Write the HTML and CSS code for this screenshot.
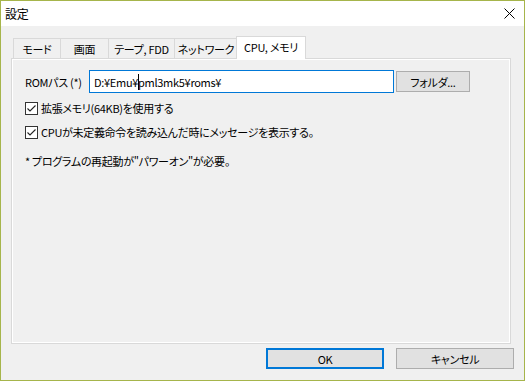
FILE: index.html
```html
<!DOCTYPE html>
<html lang="ja">
<head>
<meta charset="utf-8">
<title>設定</title>
<link rel="stylesheet" href="styles.css">
</head>
<body>
<div class="window">
  <div class="titlebar">
    <span class="title">設定</span>
    <span class="close">
      <svg width="11" height="11" viewBox="0 0 11 11"><path d="M0.5 0.5 L10.5 10.5 M10.5 0.5 L0.5 10.5" stroke="#000" stroke-width="1" fill="none"/></svg>
    </span>
  </div>
  <div class="content">
    <div class="tabs">
      <div class="tab t1">モード</div>
      <div class="tab t2">画面</div>
      <div class="tab t3">テープ, FDD</div>
      <div class="tab t4">ネットワーク</div>
      <div class="tab t5 active">CPU, メモリ</div>
    </div>
    <div class="panel">
      <div class="rom-row">
        <label class="rom-label">ROMパス (*)</label>
        <div class="input">D:¥Emu¥<span class="caret"></span>pml3mk5¥roms¥</div>
        <button class="btn folder">フォルダ...</button>
      </div>
      <div class="check first">
        <span class="box"><svg width="13" height="13" viewBox="0 0 13 13"><rect x="0.5" y="0.5" width="12" height="12" fill="#fff" stroke="#333"/><path d="M2.5 6.5 L5 9 L10.5 3.5" stroke="#222" stroke-width="1.1" fill="none"/></svg></span>
        <span>拡張メモリ(64KB)を使用する</span>
      </div>
      <div class="check">
        <span class="box"><svg width="13" height="13" viewBox="0 0 13 13"><rect x="0.5" y="0.5" width="12" height="12" fill="#fff" stroke="#333"/><path d="M2.5 6.5 L5 9 L10.5 3.5" stroke="#222" stroke-width="1.1" fill="none"/></svg></span>
        <span>CPUが未定義命令を読み込んだ時にメッセージを表示する。</span>
      </div>
      <div class="note">* プログラムの再起動が"パワーオン"が必要。</div>
    </div>
  </div>
  <div class="buttons">
    <button class="btn big ok">OK</button>
    <button class="btn big">キャンセル</button>
  </div>
</div>
</body>
</html>
```

FILE: styles.css
```css
* { box-sizing: border-box; }
html, body { margin: 0; padding: 0; background: #f0f0f0; }
body {
  font-family: "Noto Sans CJK JP", "Noto Sans", sans-serif;
  font-size: 11px;
  font-feature-settings: "palt";
  letter-spacing: -0.3px;
  color: #000;
}
.window {
  width: 525px;
  height: 381px;
  border: 1px solid #a6b54b;
  background: #f0f0f0;
  display: flex;
  flex-direction: column;
}
.titlebar {
  height: 25px;
  background: #fff;
  display: flex;
  align-items: center;
  justify-content: space-between;
  padding: 0 9px 0 4px;
  flex: none;
}
.title { line-height: 16px; font-size: 12px; }
.close { display: flex; }
.content {
  padding: 10px 13px 0 10px;
}
.tabs {
  display: flex;
  align-items: flex-end;
  height: 22px;
  padding-left: 2px;
}
.tab {
  height: 20px;
  border: 1px solid #d9d9d9;
  border-bottom: none;
  margin-right: -1px;
  background: #f0f0f0;
  display: flex;
  align-items: center;
  justify-content: center;
  padding: 0;
  line-height: 16px;
  white-space: nowrap;
}
.t1 { width: 48px; }
.t2 { width: 49px; }
.t3 { width: 67px; }
.t4 { width: 64px; }
.tab.active {
  width: 70px;
  height: 23px;
  margin-bottom: -1px;
  margin-left: -1px;
  background: #fff;
  position: relative;
  z-index: 1;
  padding: 0 0 2px 0;
}
.panel {
  height: 286px;
  border: 1px solid #d9d9d9;
  box-shadow: inset 0 0 0 1px #fff;
  background: #f0f0f0;
  padding: 11px 12px 0 13px;
}
.rom-row {
  display: flex;
  align-items: center;
  height: 23px;
}
.rom-label {
  width: 64px;
  flex: none;
  line-height: 16px;
  white-space: nowrap;
}
.input {
  width: 305px;
  height: 23px;
  border: 1px solid #0078d7;
  background: #fff;
  padding: 0 4px;
  display: flex;
  align-items: center;
  line-height: 16px;
  white-space: pre;
}
.caret {
  display: inline-block;
  width: 0;
  height: 16px;
  border-left: 1px solid #000;
  margin-right: -1px;
}
.btn {
  font: inherit;
  font-feature-settings: "palt";
  letter-spacing: -0.3px;
  color: #000;
  background: #e1e1e1;
  border: 1px solid #adadad;
  padding: 0;
  margin: 0;
  line-height: 16px;
}
.folder {
  width: 74px;
  height: 21px;
  margin-left: 2px;
}
.check {
  display: flex;
  align-items: center;
  height: 16px;
  margin-top: 8px;
  line-height: 16px;
}
.check.first { margin-top: 7px; }
.box {
  display: flex;
  width: 13px;
  height: 13px;
  margin-right: 3px;
}
.note {
  margin-top: 13px;
  line-height: 16px;
}
.buttons {
  display: flex;
  justify-content: flex-end;
  gap: 12px;
  padding: 4px 10px 0 0;
}
.btn.big {
  width: 118px;
  height: 21px;
}
.btn.ok {
  border: 2px solid #0078d7;
}
```
